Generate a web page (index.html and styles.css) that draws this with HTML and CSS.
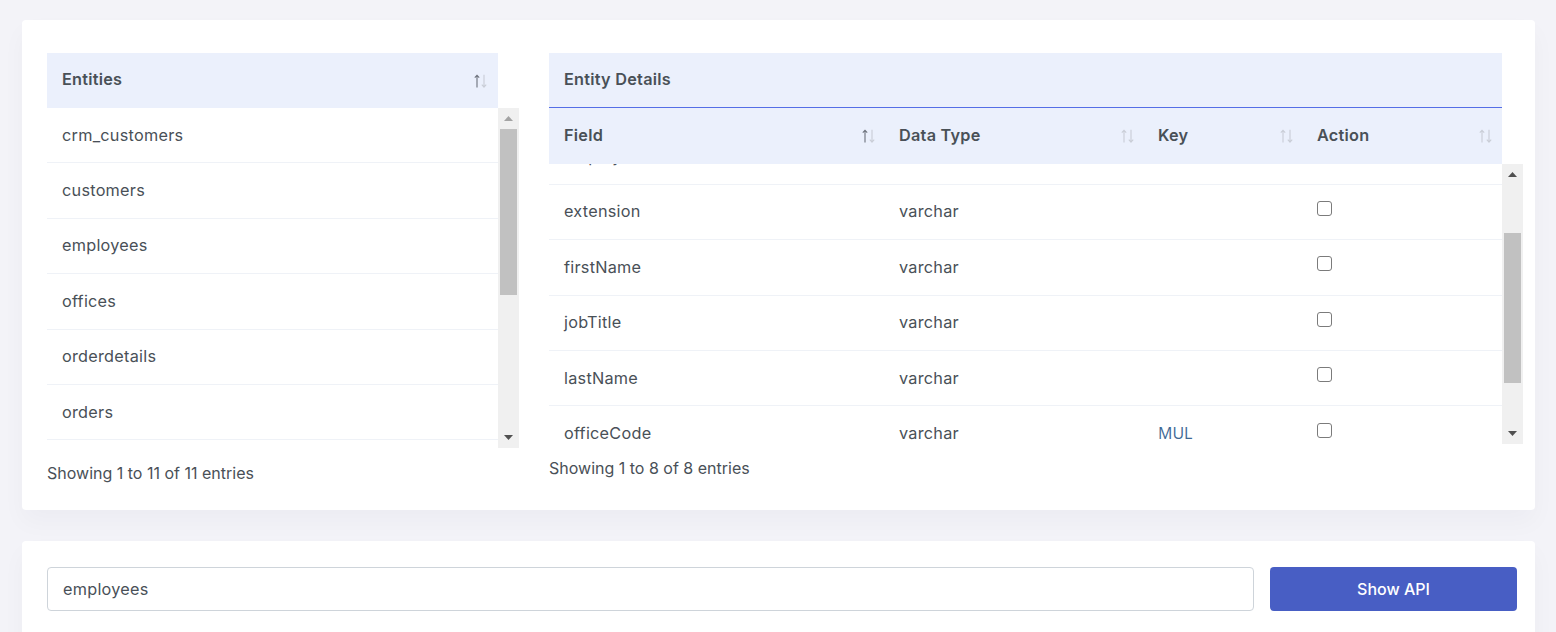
FILE: index.html
```html
<!DOCTYPE html>
<html lang="en">
<head>
<meta charset="utf-8">
<title>Entities</title>
<link rel="stylesheet" href="styles.css">
</head>
<body>
<div class="page">
  <section class="card card-tables">
    <div class="tbl tbl-entities">
      <div class="thead">
        <div class="th th-single">
          <span>Entities</span>
          <svg class="sort asc" width="14" height="14" viewBox="0 0 14 14"><path class="up" d="M3 13.5V1.2M0.8 3.6L3 1.2 5.2 3.6"/><path class="dn" d="M10 0.8v12.3M7.8 10.7L10 13.1 12.2 10.7"/></svg>
        </div>
      </div>
      <div class="body-wrap">
        <div class="tbody">
          <div class="tr"><div class="td">crm_customers</div></div>
          <div class="tr"><div class="td">customers</div></div>
          <div class="tr"><div class="td">employees</div></div>
          <div class="tr"><div class="td">offices</div></div>
          <div class="tr"><div class="td">orderdetails</div></div>
          <div class="tr"><div class="td">orders</div></div>
          <div class="tr"><div class="td">payments</div></div>
          <div class="tr"><div class="td">productlines</div></div>
          <div class="tr"><div class="td">products</div></div>
          <div class="tr"><div class="td">suppliers</div></div>
          <div class="tr"><div class="td">users</div></div>
        </div>
        <div class="vscroll">
          <div class="sbtn"><svg class="arrow disabled" width="9" height="5" viewBox="0 0 9 5"><path d="M0 5h9L4.5 0z"/></svg></div>
          <div class="track"><div class="thumb" style="margin-top:0;height:166px"></div></div>
          <div class="sbtn"><svg class="arrow" width="9" height="5" viewBox="0 0 9 5"><path d="M0 0h9L4.5 5z"/></svg></div>
        </div>
      </div>
      <div class="info">Showing 1 to 11 of 11 entries</div>
    </div>

    <div class="tbl tbl-details">
      <div class="thead">
        <div class="caption">Entity Details</div>
        <div class="hrow cols">
          <div class="th"><span>Field</span><svg class="sort asc" width="14" height="14" viewBox="0 0 14 14"><path class="up" d="M3 13.5V1.2M0.8 3.6L3 1.2 5.2 3.6"/><path class="dn" d="M10 0.8v12.3M7.8 10.7L10 13.1 12.2 10.7"/></svg></div>
          <div class="th"><span>Data Type</span><svg class="sort" width="14" height="14" viewBox="0 0 14 14"><path class="up" d="M3 13.5V1.2M0.8 3.6L3 1.2 5.2 3.6"/><path class="dn" d="M10 0.8v12.3M7.8 10.7L10 13.1 12.2 10.7"/></svg></div>
          <div class="th"><span>Key</span><svg class="sort" width="14" height="14" viewBox="0 0 14 14"><path class="up" d="M3 13.5V1.2M0.8 3.6L3 1.2 5.2 3.6"/><path class="dn" d="M10 0.8v12.3M7.8 10.7L10 13.1 12.2 10.7"/></svg></div>
          <div class="th"><span>Action</span><svg class="sort" width="14" height="14" viewBox="0 0 14 14"><path class="up" d="M3 13.5V1.2M0.8 3.6L3 1.2 5.2 3.6"/><path class="dn" d="M10 0.8v12.3M7.8 10.7L10 13.1 12.2 10.7"/></svg></div>
        </div>
      </div>
      <div class="body-wrap">
        <div class="tbody" id="detailsBody">
          <div class="tr cols"><div class="td">email</div><div class="td">varchar</div><div class="td"></div><div class="td"><input class="chk" type="checkbox"></div></div>
          <div class="tr cols"><div class="td">employeeNumber</div><div class="td">int</div><div class="td key">PRI</div><div class="td"><input class="chk" type="checkbox"></div></div>
          <div class="tr cols"><div class="td">extension</div><div class="td">varchar</div><div class="td"></div><div class="td"><input class="chk" type="checkbox"></div></div>
          <div class="tr cols"><div class="td">firstName</div><div class="td">varchar</div><div class="td"></div><div class="td"><input class="chk" type="checkbox"></div></div>
          <div class="tr cols"><div class="td">jobTitle</div><div class="td">varchar</div><div class="td"></div><div class="td"><input class="chk" type="checkbox"></div></div>
          <div class="tr cols"><div class="td">lastName</div><div class="td">varchar</div><div class="td"></div><div class="td"><input class="chk" type="checkbox"></div></div>
          <div class="tr cols"><div class="td">officeCode</div><div class="td">varchar</div><div class="td key">MUL</div><div class="td"><input class="chk" type="checkbox"></div></div>
          <div class="tr cols"><div class="td">reportsTo</div><div class="td">int</div><div class="td key">MUL</div><div class="td"><input class="chk" type="checkbox"></div></div>
        </div>
        <div class="vscroll">
          <div class="sbtn"><svg class="arrow" width="9" height="5" viewBox="0 0 9 5"><path d="M0 5h9L4.5 0z"/></svg></div>
          <div class="track"><div class="thumb" style="margin-top:48px;height:150px"></div></div>
          <div class="sbtn"><svg class="arrow" width="9" height="5" viewBox="0 0 9 5"><path d="M0 0h9L4.5 5z"/></svg></div>
        </div>
      </div>
      <div class="info">Showing 1 to 8 of 8 entries</div>
    </div>
  </section>

  <section class="card card-api">
    <input class="api-input" type="text" value="employees">
    <button class="btn" type="button">Show API</button>
  </section>
</div>
<script src="script.js"></script>
</body>
</html>
```

FILE: styles.css
```css
* { box-sizing: border-box; }

html, body { margin: 0; }

body {
  background: #f3f3f8;
  font-family: "Inter", "Open Sans", sans-serif;
  font-size: 16.25px;
  letter-spacing: 0.25px;
  color: #495057;
}

.page {
  padding: 20px 21px 0 22px;
  display: flex;
  flex-direction: column;
  gap: 31px;
}

.card {
  background: #fff;
  border-radius: 4px;
  box-shadow: 0 12px 24px rgba(18, 38, 63, 0.03);
}

.card-tables {
  height: 490px;
  padding: 33px 12px 0 25px;
  display: grid;
  grid-template-columns: 472px 974px;
  column-gap: 30px;
  align-items: start;
}

.thead {
  margin-right: 21px;
  background: #ebf0fc;
}

.th {
  display: flex;
  align-items: center;
  justify-content: space-between;
  padding: 0 9px 3px 14px;
  font-weight: 600;
  color: #495057;
}

.th .sort {
  margin-top: 3px;
}

.th-single {
  height: 55px;
  padding-left: 15px;
  padding-right: 10px;
}

.caption {
  height: 55px;
  display: flex;
  align-items: center;
  padding: 0 0 3px 15px;
  font-weight: 600;
  border-bottom: 1px solid #556ee6;
}

.hrow {
  height: 56px;
}

.cols {
  display: grid;
  grid-template-columns: 336px 259px 159px 199px;
}

.cols > :first-child {
  padding-left: 15px;
}

.sort {
  display: block;
  fill: none;
  stroke-width: 1.1;
}

.sort .up,
.sort .dn {
  stroke: #c9cdd6;
}

.sort.asc .up {
  stroke: #6c717b;
}

.body-wrap {
  display: flex;
}

.tbody {
  flex: 1;
  overflow: hidden;
  background: #fff;
}

.tbl-entities .body-wrap { height: 340px; }
.tbl-details .body-wrap { height: 280px; }

.tr {
  height: 55.4px;
  border-bottom: 1px solid #eff2f7;
}

.td {
  height: 100%;
  display: flex;
  align-items: center;
  padding: 0 0 1px 14px;
}

.tbl-entities .td { padding-left: 15px; }

.key {
  font-family: "Open Sans", sans-serif;
  letter-spacing: 0;
  color: #3e6894;
  font-size: 16px;
}

.chk {
  appearance: none;
  -webkit-appearance: none;
  margin: -6px 0 0 0;
  width: 15px;
  height: 15px;
  border: 1.3px solid #7b7b7b;
  border-radius: 3px;
  background: #fff;
}

.info {
  margin-top: 14px;
  line-height: 22px;
  font-size: 16px;
  letter-spacing: 0;
  color: #495057;
}

.tbl-details .info { margin-top: 13px; }

/* drawn scrollbars */
.vscroll {
  width: 21px;
  flex: none;
  background: #f0f0f0;
  display: flex;
  flex-direction: column;
}

.sbtn {
  height: 21px;
  flex: none;
  display: flex;
  align-items: center;
  justify-content: center;
}

.arrow {
  display: block;
  fill: #505050;
}

.arrow.disabled {
  fill: #a3a3a3;
}

.track {
  flex: 1;
  padding: 0 2px;
  display: flex;
  flex-direction: column;
}

.thumb {
  flex: none;
  background: #c1c1c1;
}

.card-api {
  height: 120px;
  padding: 26px 18px 0 25px;
  display: flex;
  align-items: flex-start;
  gap: 16px;
}

.api-input {
  flex: 1;
  height: 44px;
  border: 1px solid #ced4da;
  border-radius: 4px;
  padding: 0 15px;
  font-family: inherit;
  font-size: 16.25px;
  letter-spacing: 0.25px;
  color: #495057;
  background: #fff;
  outline: none;
}

.btn {
  width: 247px;
  height: 44px;
  border: 0;
  border-radius: 4px;
  background: #485ec4;
  color: #fff;
  font-family: inherit;
  font-size: 16px;
  letter-spacing: 0;
  font-weight: 500;
}
```

FILE: script.js
```js
document.getElementById('detailsBody').scrollTop = 90;
```
